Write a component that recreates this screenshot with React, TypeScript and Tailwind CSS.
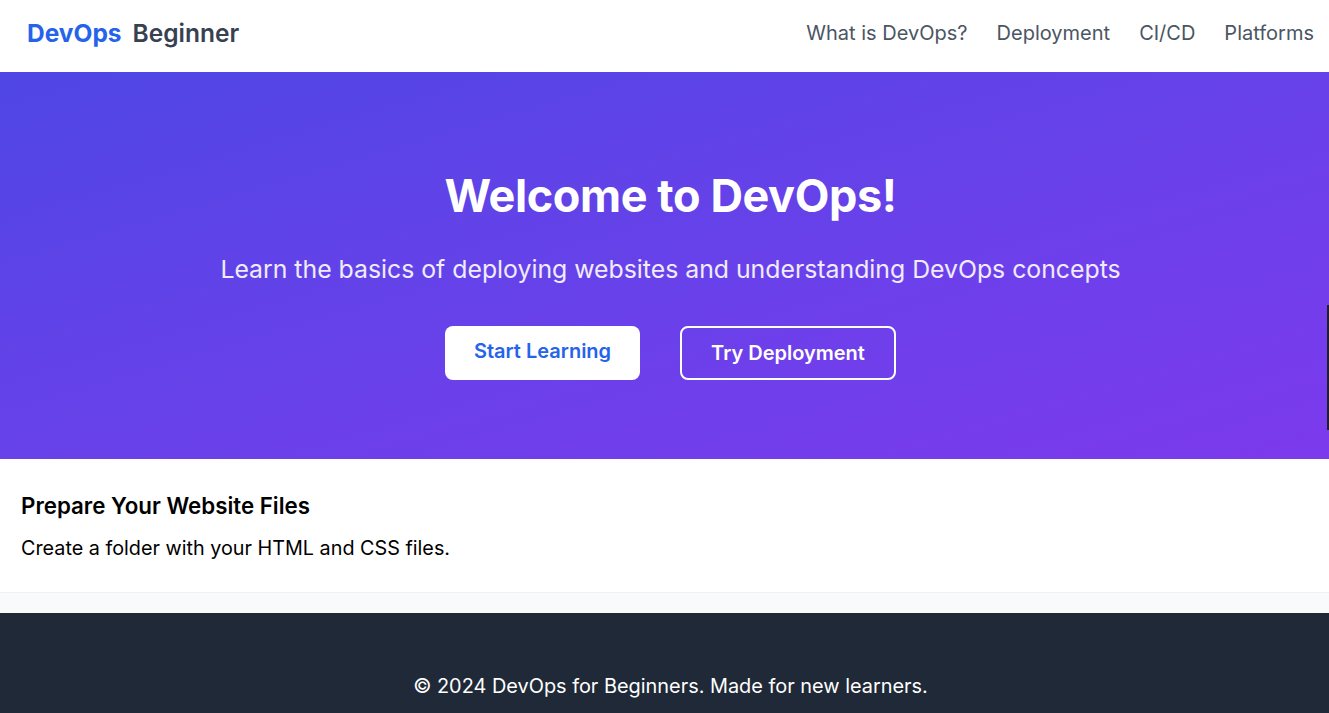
export default function App() {
  return (
    <div className="min-h-screen bg-white" style={{ fontFamily: "Inter, 'Noto Sans', sans-serif" }}>
      <header className="h-[72px] bg-white flex items-center justify-between pl-[27px] pr-[15px] pb-[6px]">
        <div className="text-[24.5px] leading-[32px] font-bold flex gap-[11px]">
          <span className="text-[#2563eb]">DevOps</span>
          <span className="text-[#374151] font-semibold">Beginner</span>
        </div>
        <nav className="flex gap-[29px] text-[20px] leading-[28px] text-[#4b5563]">
          <a>What is DevOps?</a>
          <a>Deployment</a>
          <a>CI/CD</a>
          <a>Platforms</a>
        </nav>
      </header>
      <section className="relative h-[387px] bg-gradient-to-br from-[#4f46e5] to-[#7c3aed] flex flex-col items-center text-white pl-[12px]">
        <h1 className="mt-[98px] text-[45px] leading-[52px] font-bold tracking-[-0.4px]">Welcome to DevOps!</h1>
        <p className="mt-[31px] text-[24.8px] leading-[32px] text-white/90">
          Learn the basics of deploying websites and understanding DevOps concepts
        </p>
        <div className="mt-[41px] flex gap-[40px]">
          <button className="w-[195px] h-[54px] bg-white rounded-lg text-[#2563eb] text-[20px] font-semibold pb-[4px]">
            Start Learning
          </button>
          <button className="w-[216px] h-[54px] border-2 border-white rounded-lg text-white text-[20px] font-semibold">
            Try Deployment
          </button>
        </div>
        <div className="absolute right-0 top-[233px] w-[2px] h-[125px] bg-[#1f1f2e]" />
      </section>
      <section className="bg-white px-[21px] pt-[32px] pb-[29px] border-b border-[#eef0f3]">
        <h2 className="text-[22.3px] leading-[30px] font-semibold text-black">Prepare Your Website Files</h2>
        <p className="mt-[12px] text-[19.8px] leading-[30px] text-black">Create a folder with your HTML and CSS files.</p>
      </section>
      <div className="h-[20px] bg-[#f9fafb]" />
      <footer className="bg-[#1f2937] h-[100px] pt-[59px] pl-[12px] text-center text-white text-[19.9px] leading-[28px]">
        © 2024 DevOps for Beginners. Made for new learners.
      </footer>
    </div>
  );
}
